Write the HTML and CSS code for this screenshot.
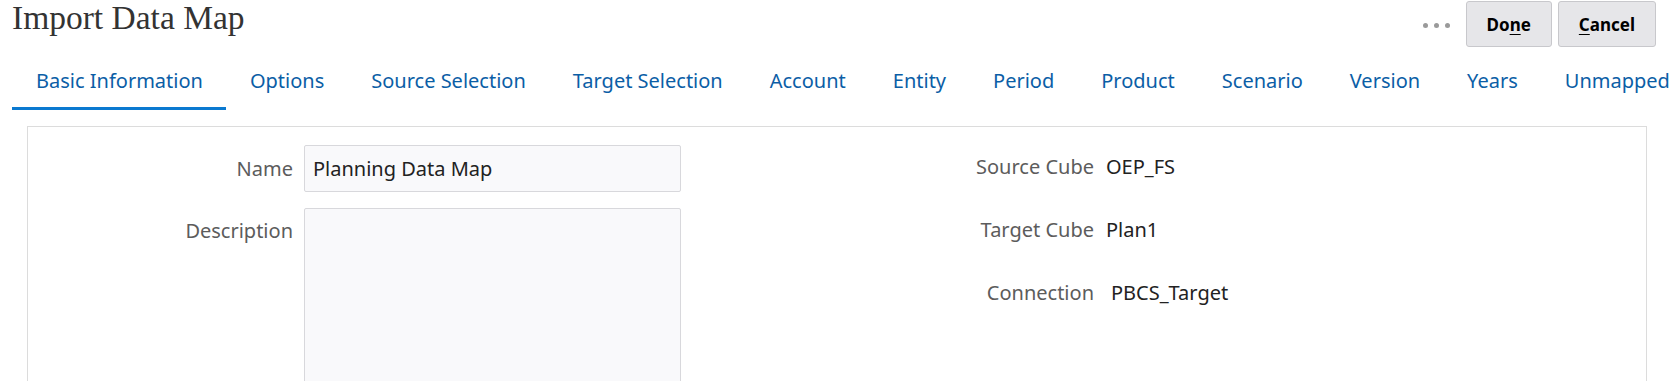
FILE: index.html
```html
<!DOCTYPE html>
<html lang="en">
<head>
    <meta charset="UTF-8">
    <meta name="viewport" content="width=device-width, initial-scale=1.0">
    <title>Import Data Map</title>
    <link rel="stylesheet" href="styles.css">
</head>
<body>
    <div class="page">
        <header class="header">
            <h1>Import Data Map</h1>
            <div class="actions">
                <span class="more" title="More actions">
                    <i></i><i></i><i></i>
                </span>
                <button type="button" class="btn">Do<u>n</u>e</button>
                <button type="button" class="btn"><u>C</u>ancel</button>
            </div>
        </header>

        <nav class="tabs">
            <a class="tab active" href="#">Basic Information</a>
            <a class="tab" href="#">Options</a>
            <a class="tab" href="#">Source Selection</a>
            <a class="tab" href="#">Target Selection</a>
            <a class="tab" href="#">Account</a>
            <a class="tab" href="#">Entity</a>
            <a class="tab" href="#">Period</a>
            <a class="tab" href="#">Product</a>
            <a class="tab" href="#">Scenario</a>
            <a class="tab" href="#">Version</a>
            <a class="tab" href="#">Years</a>
            <a class="tab" href="#">Unmapped Dimensions</a>
        </nav>

        <section class="panel">
            <div class="form-left">
                <label class="label label-mid" for="mapName">Name</label>
                <input type="text" id="mapName" class="field" value="Planning Data Map">

                <label class="label label-top" for="mapDesc">Description</label>
                <textarea id="mapDesc" class="field area"></textarea>
            </div>

            <div class="form-right">
                <span class="label">Source Cube</span>
                <span class="value">OEP_FS</span>

                <span class="label">Target Cube</span>
                <span class="value">Plan1</span>

                <span class="label">Connection</span>
                <span class="value value-conn">PBCS_Target</span>
            </div>
        </section>
    </div>
</body>
</html>
```

FILE: styles.css
```css
html, body {
    margin: 0;
    padding: 0;
    background: #fff;
}
body {
    font-family: "Noto Sans", "Open Sans", sans-serif;
    color: #222;
}
.page {
    height: 100vh;
    overflow: hidden;
}

/* header */
.header {
    display: flex;
    justify-content: space-between;
    align-items: flex-start;
    height: 48px;
    padding-left: 12px;
    padding-right: 18px;
}
h1 {
    margin: 0;
    font-family: "Liberation Serif", "Times New Roman", serif;
    font-weight: normal;
    font-size: 33.5px;
    line-height: 36px;
    color: #333;
}
.actions {
    display: flex;
    align-items: center;
    gap: 6px;
    padding-top: 1px;
}
.more {
    display: flex;
    gap: 6px;
    margin-right: 10px;
    padding-top: 2px;
}
.more i {
    width: 5px;
    height: 5px;
    border-radius: 50%;
    background: #9a9a9a;
}
.btn {
    height: 46px;
    padding: 0 20px;
    font-family: "Noto Sans", sans-serif;
    font-weight: bold;
    font-size: 17px;
    color: #000;
    background: #e6e6e9;
    border: 1px solid #c8c8cc;
    border-radius: 3px;
    cursor: pointer;
}
.btn u {
    text-underline-offset: 3px;
}

/* tabs */
.tabs {
    display: flex;
    white-space: nowrap;
    overflow: hidden;
    padding-left: 12px;
}
.tab {
    flex: none;
    padding: 19px 23px 13px 24px;
    font-size: 20px;
    line-height: 27px;
    color: #0b5ea6;
    text-decoration: none;
    border-bottom: 3px solid transparent;
}
.tab.active {
    border-bottom-color: #0a79d0;
}

/* panel */
.panel {
    display: flex;
    align-items: flex-start;
    margin: 16px 27px 0 27px;
    padding-top: 18px;
    height: 400px;
    border: 1px solid #dcdcdc;
    border-bottom: none;
}
.form-left {
    display: grid;
    grid-template-columns: 265px 377px;
    column-gap: 11px;
    row-gap: 16px;
}
.label {
    font-size: 20px;
    line-height: 27px;
    color: #5c5c5c;
    text-align: right;
}
.label-mid {
    align-self: center;
}
.label-top {
    padding-top: 9px;
}
.field {
    box-sizing: border-box;
    width: 100%;
    height: 47px;
    margin: 0;
    padding: 0 8px;
    font-family: "Noto Sans", sans-serif;
    font-size: 20px;
    color: #222;
    background: #f9f9fb;
    border: 1px solid #d8d8dc;
    border-radius: 2px;
}
.area {
    height: 260px;
    resize: none;
}
.form-right {
    display: grid;
    grid-template-columns: 150px auto;
    column-gap: 12px;
    row-gap: 36px;
    margin-left: 263px;
    padding-top: 8px;
}
.value {
    font-size: 20px;
    line-height: 27px;
    color: #222;
}
.value-conn {
    padding-left: 5px;
}
```
